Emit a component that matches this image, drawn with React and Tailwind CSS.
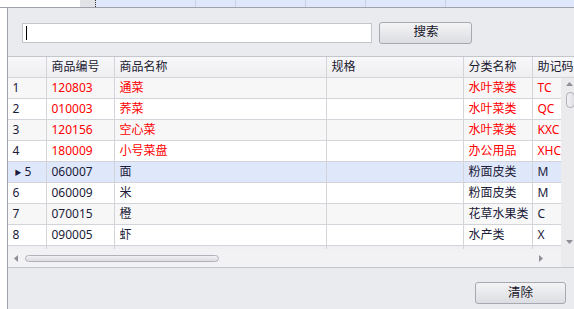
import React from "react";

const font = { fontFamily: '"Noto Sans", "Noto Sans CJK SC", sans-serif' };

const rows = [
  { n: "1", code: "120803", name: "通菜", cat: "水叶菜类", abbr: "TC", red: true },
  { n: "2", code: "010003", name: "荞菜", cat: "水叶菜类", abbr: "QC", red: true },
  { n: "3", code: "120156", name: "空心菜", cat: "水叶菜类", abbr: "KXC", red: true },
  { n: "4", code: "180009", name: "小号菜盘", cat: "办公用品", abbr: "XHC", red: true },
  { n: "5", code: "060007", name: "面", cat: "粉面皮类", abbr: "M", sel: true },
  { n: "6", code: "060009", name: "米", cat: "粉面皮类", abbr: "M" },
  { n: "7", code: "070015", name: "橙", cat: "花草水果类", abbr: "C" },
  { n: "8", code: "090005", name: "虾", cat: "水产类", abbr: "X" },
];

function Btn({ children, className }) {
  return (
    <div
      className={
        "flex items-center justify-center rounded-[3px] border border-[#a7a9b1] bg-gradient-to-b from-[#f4f4f6] to-[#dcdde2] text-[12.5px] text-[#151528] " +
        className
      }
    >
      {children}
    </div>
  );
}

export default function App() {
  return (
    <div className="w-[574px] h-[309px] overflow-hidden bg-white flex flex-col text-[12px] leading-none" style={font}>
      {/* top strip */}
      <div className="flex h-[8px] shrink-0 border-b border-[#9ea3ab]">
        <div className="w-[80px] bg-white" />
        <div className="w-[16px] bg-[#e2e3e6] border-r border-dotted border-[#333]" />
        <div className="w-[100px] bg-[#dfe8fb] border-r border-[#c9d1e2]" />
        <div className="w-[40px] bg-[#dfe8fb] border-r border-[#c9d1e2]" />
        <div className="w-[70px] bg-[#dfe8fb] border-r border-[#c9d1e2]" />
        <div className="w-[60px] bg-[#dfe8fb] border-r border-[#c9d1e2]" />
        <div className="w-[80px] bg-[#dfe8fb] border-r border-[#c9d1e2]" />
        <div className="flex-1 bg-[#dfe8fb]" />
      </div>
      <div className="flex flex-1">
        <div className="w-[9px] bg-white" />
        <div className="flex-1 bg-[#eaebef] border-l border-[#9ea3ab] flex flex-col">
          {/* search row */}
          <div className="flex items-center h-[48px] pl-[14px] pt-[1px]">
            <div className="w-[350px] h-[20px] bg-white border border-[#c4c6cc] flex items-center pl-[3px]">
              <div className="w-[1px] h-[14px] bg-black" />
            </div>
            <Btn className="ml-[7px] w-[93px] h-[22px]">搜索</Btn>
          </div>
          {/* grid */}
          <div className="h-[212px] bg-[#f0f0f3] border-t border-b border-[#c4c6cc] flex flex-col overflow-hidden">
            {/* header */}
            <div className="flex h-[21px] shrink-0 bg-gradient-to-b from-[#f8f8fa] to-[#eeeef1] border-b border-[#d3d3da] text-[#1a1a30]">
              <div className="w-[39px] border-r border-[#d3d3da]" />
              <div className="w-[68px] border-r border-[#d3d3da] flex items-center pl-[4px]">商品编号</div>
              <div className="w-[212px] border-r border-[#d3d3da] flex items-center pl-[4px]">商品名称</div>
              <div className="w-[137px] border-r border-[#d3d3da] flex items-center pl-[4px]">规格</div>
              <div className="w-[69px] border-r border-[#d3d3da] flex items-center pl-[4px]">分类名称</div>
              <div className="flex-1 flex items-center pl-[4px] whitespace-nowrap overflow-hidden">助记码</div>
            </div>
            <div className="flex flex-1 overflow-hidden">
              <div className="flex-1 flex flex-col overflow-hidden">
                {rows.map((r, i) => {
                  const bg = r.sel ? "bg-[#dfe8fb]" : i % 2 === 0 ? "bg-[#f7f7f8]" : "bg-white";
                  const col = r.red ? "text-[#ff0000]" : "text-[#1c1c3a]";
                  return (
                    <div key={r.n} className={"flex h-[21px] shrink-0 border-b border-[#d3d3da] " + bg + " " + col}>
                      <div className="w-[39px] border-r border-[#d3d3da] flex items-center pl-[4px] text-[#1c1c3a]">
                        {r.sel ? (
                          <>
                            <span className="text-[7px] ml-[2px] mr-[3px]">▶</span>
                            <span>{r.n}</span>
                          </>
                        ) : (
                          r.n
                        )}
                      </div>
                      <div className="w-[68px] border-r border-[#d3d3da] flex items-center pl-[4px]">{r.code}</div>
                      <div className="w-[212px] border-r border-[#d3d3da] flex items-center pl-[4px]">{r.name}</div>
                      <div className="w-[137px] border-r border-[#d3d3da]" />
                      <div className="w-[69px] border-r border-[#d3d3da] flex items-center pl-[4px] whitespace-nowrap overflow-hidden">{r.cat}</div>
                      <div className="flex-1 flex items-center pl-[4px] whitespace-nowrap overflow-hidden">{r.abbr}</div>
                    </div>
                  );
                })}
                <div className="flex h-[4px] shrink-0 bg-[#f0f0f3]">
                  <div className="w-[39px] border-r border-[#d3d3da]" />
                  <div className="w-[68px] border-r border-[#d3d3da]" />
                  <div className="w-[212px] border-r border-[#d3d3da]" />
                  <div className="w-[137px] border-r border-[#d3d3da]" />
                  <div className="w-[69px] border-r border-[#d3d3da]" />
                </div>
              </div>
              {/* vertical scrollbar */}
              <div className="w-[13px] bg-[#ebebee] flex flex-col items-center">
                <svg width="7" height="4" viewBox="0 0 7 4" className="mt-[4px] ml-[4px]">
                  <path d="M0 4 L3.5 0 L7 4 Z" fill="#8e8e96" />
                </svg>
                <div className="mt-[6px] ml-[6px] w-[9px] h-[16px] rounded-[4px] border border-[#b2b3ba] bg-gradient-to-r from-[#f2f2f4] to-[#dedee3]" />
                <div className="flex-1" />
                <svg width="7" height="4" viewBox="0 0 7 4" className="mb-[5px] ml-[4px]">
                  <path d="M0 0 L7 0 L3.5 4 Z" fill="#8e8e96" />
                </svg>
              </div>
            </div>
            {/* horizontal scrollbar */}
            <div className="flex h-[18px] shrink-0 bg-[#f2f2f4] items-center">
              <svg width="4" height="7" viewBox="0 0 4 7" className="ml-[6px]">
                <path d="M4 0 L0 3.5 L4 7 Z" fill="#8e8e96" />
              </svg>
              <div className="ml-[7px] w-[194px] h-[7px] rounded-full border border-[#b2b3ba] bg-gradient-to-b from-[#f2f2f4] to-[#dcdce1]" />
              <div className="flex-1" />
              <svg width="4" height="7" viewBox="0 0 4 7" className="mr-[18px]">
                <path d="M0 0 L4 3.5 L0 7 Z" fill="#8e8e96" />
              </svg>
              <div className="w-[13px] h-full bg-[#ebebee]" />
            </div>
          </div>
          {/* bottom */}
          <div className="flex justify-end pr-[8px] pt-[14px]">
            <Btn className="w-[91px] h-[22px]">清除</Btn>
          </div>
        </div>
      </div>
    </div>
  );
}
